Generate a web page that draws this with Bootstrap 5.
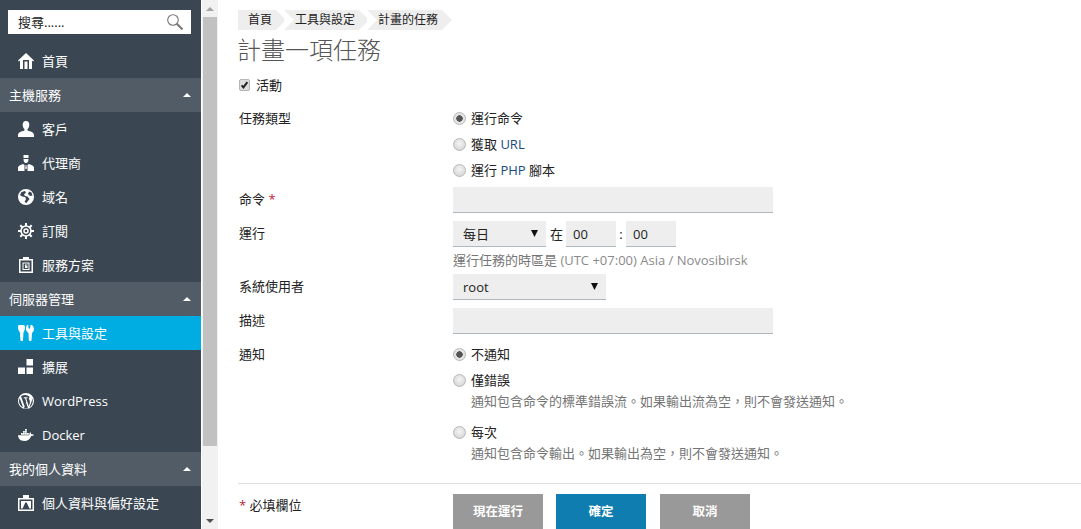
<!DOCTYPE html>
<html lang="zh-Hant"><head><meta charset="utf-8"><title>計畫一項任務</title>
<link href="https://cdn.jsdelivr.net/npm/bootstrap@5.3.0/dist/css/bootstrap.min.css" rel="stylesheet">
<style>
html,body{height:529px;overflow:hidden}
body{font-family:"Open Sans","Noto Sans CJK TC",sans-serif;font-size:13px;line-height:18px;color:#222;background:#fff}
.shell{height:529px}
.side{width:201px;flex:none;background:#3a4752;color:#fff;overflow:hidden}
.sbox{height:24px;margin:10px 10px 10px 8px;background:#fff;color:#222;padding:0 8px 0 10px}
.sbox span{line-height:24px}
.sitem,.shead{height:34px;color:#fff}
.sitem{padding-left:18px;gap:8px}
.sitem.on{background:#00ade3}
.sitem svg{width:16px;height:16px;flex:none;fill:#fff}
.shead{background:#515c67;padding:0 10px 0 9px}
.tri{width:0;height:0;border:4px solid transparent;border-top:0;border-bottom:4px solid #fff}
.sbar{width:17px;flex:none;background:#f1f1f1;border-left:1px solid #fff;padding:0 0 0 1px}
.sbar-thumb{background:#c1c1c1;height:429px;width:14px}
.sbar-btn{height:17px;width:14px}
.up{width:0;height:0;border:4px solid transparent;border-top:0;border-bottom:4px solid #a3a3a3}
.dn{width:0;height:0;border:4px solid transparent;border-bottom:0;border-top:4px solid #505050}
.pane{flex:1;min-width:0;padding:10px 0 0 20px;overflow:hidden}
.crumbs{height:20px}
.crumb{background:#eee;height:20px;line-height:20px;color:#222;padding:0 4px 0 10px;position:relative;margin-right:9px;font-size:12px}
.crumb::after{content:"";position:absolute;left:100%;top:0;border-left:10px solid #eee;border-top:10px solid transparent;border-bottom:10px solid transparent}
.crumb+.crumb::before{content:"";position:absolute;left:0;top:0;border-left:10px solid #fff;border-top:10px solid transparent;border-bottom:10px solid transparent}
.crumb+.crumb{padding-left:11px;margin-left:-1px}
.ttl{font-size:24px;line-height:32px;font-weight:300;color:#555;margin:4px 0 0 -1px}
.chk{height:17px;margin:10px 0 0 1px;gap:6px}
.fake-chk{appearance:none;width:11px;height:12px;margin:0;border:1px solid #b5b5b5;border-radius:2px;background:#ddd}
.fake-chk:checked{background:#ddd url("data:image/svg+xml,%3Csvg xmlns='http://www.w3.org/2000/svg' viewBox='0 0 11 12'%3E%3Cpath d='M2 6.500l2.200 2.500L9 2.500' fill='none' stroke='%23222' stroke-width='2.400'/%3E%3C/svg%3E") center/contain no-repeat}
.frow{padding-left:1px}
.flab{width:214px;flex:none;padding-top:3px}
.flab-a{padding-top:4px}
.flab-b{padding-top:2px}
.rd{gap:5px;height:26px}
.rd input{appearance:none;width:13px;height:13px;margin:0;flex:none;border-radius:50%;background:radial-gradient(circle at 50% 40%,#f4f4f4,#cfcfcf);border:1px solid #b8b8b8}
.rd input:checked{background:radial-gradient(circle,#555 0 3px,#e4e4e4 3.400px)}
.url{color:#164c7e}
.star{color:#c0213b}
.inp{background:#eee;border:0;border-bottom:1px solid #aeb8bf;border-radius:0;height:26px;padding:0 11px;font:inherit;color:#222;display:block}
select.inp{appearance:none;background:#eee url("data:image/svg+xml,%3Csvg xmlns='http://www.w3.org/2000/svg' width='8' height='7'%3E%3Cpath d='M0 0h7L3.500 7z' fill='%23111'/%3E%3C/svg%3E") no-repeat calc(100% - 7px) 50%;padding-left:10px}
.w320{width:320px}.w93{width:93px}.w153{width:153px}.w50{width:50px;padding:0 7px}
.at{margin:0 3px 0 4px}
.colon{width:10px;text-align:center}
.hint{color:#757575;height:18px;margin-top:4px}
.muted2{color:#8a8a8a}
.desc{color:#757575;padding-left:18px;margin-top:-1px}
.rule{border-top:1px solid #ddd;height:0;margin-top:21px}
.act{width:90px;height:35px;border:0;border-radius:0;background:#999;color:#fff;font-weight:700;font-size:12.500px;padding:2px 0 0}
.act.pri{background:#107db0}
.act.last{margin-left:1px}
.gapb{gap:13px}
.m12{margin-top:12px}.m4{margin-top:4px}.m8{margin-top:8px}.m5{margin-top:5px}.m7{margin-top:7px}.m10{margin-top:10px}.m9{margin-top:9px}
</style></head><body>
<div class="shell d-flex">
<nav class="side d-flex flex-column">
<div class="sbox d-flex align-items-center justify-content-between"><span>搜尋......</span>
<svg width="16" height="16" viewBox="0 0 16 16" fill="none" stroke="#777"><circle cx="6" cy="6" r="5.300" stroke-width="1.100"/><path d="M9.800 9.800l5.700 5.700" stroke-width="2"/></svg></div>
<a class="sitem d-flex align-items-center text-decoration-none"><svg viewBox="0 0 16 16"><path fill-rule="evenodd" d="M8 0l8 7.500-1 1-1-.9V16H2V7.600l-1 .9-1-1zM5 7h6v9H5zM6.500 8.500h3V16h-3z"/></svg><span>首頁</span></a>
<div class="shead d-flex align-items-center justify-content-between"><span>主機服務</span><i class="tri"></i></div>
<a class="sitem d-flex align-items-center text-decoration-none"><svg viewBox="0 0 16 16"><path d="M8 0c2.300 0 3.300 1.700 3.300 3.700 0 2-1 3.600-1.800 4.600-.3.600 0 1.200.6 1.500C12 10.500 16 11 16 14v2H0v-2c0-3 4-3.500 5.900-4.200.6-.3.900-.9.600-1.500C5.700 7.300 4.700 5.700 4.700 3.700 4.700 1.700 5.700 0 8 0z"/></svg><span>客戶</span></a>
<a class="sitem d-flex align-items-center text-decoration-none"><svg viewBox="0 0 16 16"><path fill-rule="evenodd" d="M5.500 0h5v3h-5zM5.500 4h5c0 2-.6 4-2.500 4S5.500 6 5.500 4zM0 16v-3.500C0 11 2.500 9.800 5 9l1.500 1v6zM16 16v-3.500c0-1.500-2.500-2.700-5-3.500l-1.500 1v6zM7.500 10h1v2l.5 1-1 1.500L7 13l.5-1z"/></svg><span>代理商</span></a>
<a class="sitem d-flex align-items-center text-decoration-none"><svg viewBox="0 0 16 16"><path fill-rule="evenodd" d="M8 0a8 8 0 1 1 0 16A8 8 0 0 1 8 0zM7 2L3.500 3 2 6l2 1.500L7 8l1 2-1.500 3 2 1 3-4-2-2.500-2.500-.5-1-1.500L8 3.500zM11 2.500L10 5l2 2 2.500-.5-1-3z"/></svg><span>域名</span></a>
<a class="sitem d-flex align-items-center text-decoration-none"><svg viewBox="0 0 16 16"><g fill="none" stroke="#fff"><circle cx="8" cy="8" r="5" stroke-width="1.600"/><circle cx="8" cy="8" r="2" stroke-width="1.500"/><path stroke-width="2" d="M8 0v3M8 13v3M0 8h3M13 8h3M2.300 2.300l2.200 2.200M11.500 11.500l2.200 2.200M13.700 2.300l-2.200 2.200M4.500 11.500l-2.200 2.200"/></g></svg><span>訂閱</span></a>
<a class="sitem d-flex align-items-center text-decoration-none"><svg viewBox="0 0 16 16"><path fill-rule="evenodd" d="M1 2h4V0h6v2h4v14H1zM2.500 3.500v11h11v-11zM4.500 5.500h7v7.500h-7zM5.500 6.500v5.500h5V6.500zM7 7.500h2.500v1H8v.5h1.500v2H7v-1h1.500V10H7z"/></svg><span>服務方案</span></a>
<div class="shead d-flex align-items-center justify-content-between"><span>伺服器管理</span><i class="tri"></i></div>
<a class="sitem on d-flex align-items-center text-decoration-none"><svg viewBox="0 0 16 16"><path d="M1 0h4.500C6.500 0 7 1 7 2.500 7 5 6 6.500 5.500 7.500L5 15c0 1.300-2.500 1.300-2.600 0L2 7.500C1.300 6.500 0 5 0 2.500 0 1 .3 0 1 0zM9 0h1.200l.3 3.500h1.600L12.500 0h1.300c1.300 1 2.200 2.500 2.200 4 0 2-1.100 3.200-2 4l-.5 7c-.1 1.300-2.600 1.300-2.700 0l-.3-7C9.600 7.200 8 6 8 4c0-1.500.4-3 1-4z"/></svg><span>工具與設定</span></a>
<a class="sitem d-flex align-items-center text-decoration-none"><svg viewBox="0 0 16 16"><path d="M8.500 0H15v6.500H8.500zM0 8.500h7V15H0zM8.500 8.500H15V15H8.500z"/></svg><span>擴展</span></a>
<a class="sitem d-flex align-items-center text-decoration-none"><svg viewBox="0 0 16 16"><path fill-rule="evenodd" d="M8 0a8 8 0 1 1 0 16A8 8 0 0 1 8 0zM1.700 5.200A6.800 6.800 0 0 0 5 14.200zM3 3.300L6.600 13.300 8.200 8.800 7 5.200H5.800v-.9h3.600v.9H8.200l2.600 8 .8-2.600c.6-1.800.2-3-.4-4-.5-.8-.6-1.600 0-2.200.2-.2.400-.3.700-.3A6.800 6.800 0 0 0 3 3.300zM14 5.200c.2 1.500-.2 2.800-.6 4l-2 5A6.800 6.800 0 0 0 14 5.200zM8 9.600l-2 5.700c1.300.4 2.700.4 4-.1z"/></svg><span>WordPress</span></a>
<a class="sitem d-flex align-items-center text-decoration-none"><svg viewBox="0 0 16 16"><path d="M3 6h1.800v1.700H3zM5 6h1.800v1.700H5zM7 6h1.800v1.700H7zM5 4h1.800v1.700H5zM7 4h1.800v1.700H7zM7 2h1.800v1.700H7zM9 6h1.800v1.700H9zM0 8.300h11.200c.2-1.500.4-2.500 1-3 .7.400 1 1.200 1 2 .8-.3 1.800-.2 2.800.4-.6 1-1.500 1.300-2.800 1.300-1 3-3.500 5-7 5C2.500 14 .4 12 0 8.300z"/></svg><span>Docker</span></a>
<div class="shead d-flex align-items-center justify-content-between"><span>我的個人資料</span><i class="tri"></i></div>
<a class="sitem d-flex align-items-center text-decoration-none"><svg viewBox="0 0 16 16"><path fill-rule="evenodd" d="M5 0h6v3h5v13H0V3h5zM1.500 4.500v10h13v-10zM3 6h10v7.500H3zM7.300 7.500h1.400l2.700 6h-6.800z"/></svg><span>個人資料與偏好設定</span></a>
</nav>
<div class="sbar d-flex flex-column"><div class="sbar-btn d-flex align-items-center justify-content-center"><i class="up"></i></div><div class="sbar-thumb"></div><div class="flex-grow-1"></div><div class="sbar-btn d-flex align-items-center justify-content-center"><i class="dn"></i></div></div>
<main class="pane">
<div class="crumbs d-flex"><span class="crumb">首頁</span><span class="crumb">工具與設定</span><span class="crumb">計畫的任務</span></div>
<h1 class="ttl mb-0">計畫一項任務</h1>
<label class="chk d-flex align-items-center"><input class="fake-chk" type="checkbox" checked><span>活動</span></label>
<div class="frow d-flex m12"><div class="flab flab-a">任務類型</div>
<div><label class="rd d-flex align-items-center"><input type="radio" name="t" checked><span>運行命令</span></label><label class="rd d-flex align-items-center"><input type="radio" name="t"><span>獲取 <span class="url">URL</span></span></label><label class="rd d-flex align-items-center"><input type="radio" name="t"><span>運行 <span class="url">PHP</span> 腳本</span></label></div></div>
<div class="frow d-flex align-items-start m4"><div class="flab">命令 <span class="star">*</span></div><input class="inp w320" type="text"></div>
<div class="frow d-flex m8"><div class="flab">運行</div>
<div><div class="d-flex align-items-center"><select class="inp w93"><option>每日</option></select><span class="at">在</span><input class="inp w50" value="00"><span class="colon">:</span><input class="inp w50" value="00"></div>
<div class="hint">運行任務的時區是 <span class="muted2">(UTC +07:00) Asia / Novosibirsk</span></div></div></div>
<div class="frow d-flex m5"><div class="flab">系統使用者</div><select class="inp w153"><option>root</option></select></div>
<div class="frow d-flex m8"><div class="flab">描述</div><input class="inp w320" type="text"></div>
<div class="frow d-flex m7"><div class="flab flab-a">通知</div>
<div><label class="rd d-flex align-items-center">
<input type="radio" name="n" checked><span>不通知</span></label>
<label class="rd d-flex align-items-center"><input type="radio" name="n"><span>僅錯誤</span></label>
<div class="desc">通知包含命令的標準錯誤流。如果輸出流為空，則不會發送通知。</div>
<label class="rd d-flex align-items-center m9"><input type="radio" name="n"><span>每次</span></label>
<div class="desc">通知包含命令輸出。如果輸出為空，則不會發送通知。</div></div></div>
<div class="rule"></div>
<div class="frow d-flex m10"><div class="flab flab-b">
<span class="star">*</span> 必填欄位</div>
<div class="d-flex gapb"><button class="btn act">現在運行</button><button class="btn act pri">確定</button><button class="btn act last">取消</button></div></div>
</main>
</div>
<script src="https://cdn.jsdelivr.net/npm/bootstrap@5.3.0/dist/js/bootstrap.bundle.min.js"></script>
</body></html>
